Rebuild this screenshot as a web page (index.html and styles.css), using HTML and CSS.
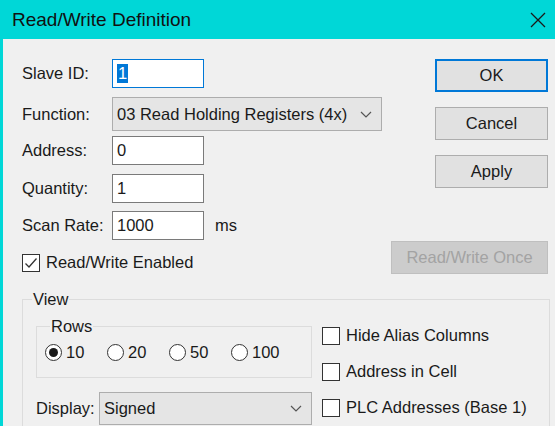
FILE: index.html
```html
<!DOCTYPE html>
<html>
<head>
<meta charset="utf-8">
<link rel="stylesheet" href="styles.css">
</head>
<body>
<div class="window">
  <div class="titlebar">
    <span class="title">Read/Write Definition</span>
    <svg class="close" width="16" height="16" viewBox="0 0 16 16"><path d="M1 1L15 15M15 1L1 15" stroke="#1a1a1a" stroke-width="1.3" fill="none"/></svg>
  </div>
  <div class="client">
    <div class="top">
      <div class="form">
        <div class="row r1">
          <span class="label">Slave ID:</span>
          <div class="input focus"><span class="sel">1</span></div>
        </div>
        <div class="row r2">
          <span class="label">Function:</span>
          <div class="combo wide"><span>03 Read Holding Registers (4x)</span><svg class="chev" width="12" height="7" viewBox="0 0 12 7"><path d="M1 1L6 6L11 1" stroke="#555" stroke-width="1.2" fill="none"/></svg></div>
        </div>
        <div class="row r3">
          <span class="label">Address:</span>
          <div class="input"><span>0</span></div>
        </div>
        <div class="row r4">
          <span class="label">Quantity:</span>
          <div class="input"><span>1</span></div>
        </div>
        <div class="row r5">
          <span class="label">Scan Rate:</span>
          <div class="input"><span>1000</span></div>
          <span class="unit">ms</span>
        </div>
        <div class="check enabled">
          <span class="box"><svg width="16" height="16" viewBox="0 0 16 16"><path d="M2.5 8.5L6 12L13.5 3.5" stroke="#333" stroke-width="1.3" fill="none"/></svg></span>
          <span>Read/Write Enabled</span>
        </div>
      </div>
      <div class="buttons">
        <div class="btn default">OK</div>
        <div class="btn">Cancel</div>
        <div class="btn">Apply</div>
        <div class="btn disabled">Read/Write Once</div>
      </div>
    </div>
    <div class="group view">
      <span class="legend">View</span>
      <div class="view-body">
        <div class="view-left">
          <div class="group rows">
            <span class="legend">Rows</span>
            <div class="radios">
              <div class="radio on"><span class="circle"></span><span>10</span></div>
              <div class="radio"><span class="circle"></span><span>20</span></div>
              <div class="radio"><span class="circle"></span><span>50</span></div>
              <div class="radio"><span class="circle"></span><span>100</span></div>
            </div>
          </div>
          <div class="display">
            <span class="label2">Display:</span>
            <div class="combo disp"><span>Signed</span><svg class="chev" width="12" height="7" viewBox="0 0 12 7"><path d="M1 1L6 6L11 1" stroke="#555" stroke-width="1.2" fill="none"/></svg></div>
          </div>
        </div>
        <div class="view-right">
          <div class="check"><span class="box"></span><span>Hide Alias Columns</span></div>
          <div class="check"><span class="box"></span><span>Address in Cell</span></div>
          <div class="check"><span class="box"></span><span>PLC Addresses (Base 1)</span></div>
        </div>
      </div>
    </div>
  </div>
</div>
</body>
</html>
```

FILE: styles.css
```css
* { box-sizing: border-box; }
html, body { margin: 0; padding: 0; }
body {
  width: 555px;
  height: 426px;
  overflow: hidden;
  font-family: "Liberation Sans", Arial, sans-serif;
  font-size: 16.5px;
  color: #1a1a1a;
  background: #f0f0f0;
}
.window {
  width: 555px;
  height: 426px;
  border-left: 3px solid #00d7d7;
  background: #f0f0f0;
  overflow: hidden;
}
.titlebar {
  height: 39px;
  background: #00d7d7;
  margin-left: -3px;
  display: flex;
  align-items: center;
  justify-content: space-between;
  padding: 0 9px 0 12px;
}
.title {
  font-size: 19px;
  color: #111;
}
.close { display: block; }
.client {
  padding: 20px 0 0 19px;
}
.top {
  display: flex;
  justify-content: space-between;
}
.form {
  display: flex;
  flex-direction: column;
}
.row {
  display: flex;
  align-items: center;
}
.r2 { margin-top: 9px; }
.r3 { margin-top: 5px; }
.r4 { margin-top: 9px; }
.r5 { margin-top: 8px; }
.label { width: 90px; }
.input {
  width: 92px;
  height: 29px;
  background: #fff;
  border: 1px solid #7a7a7a;
  display: flex;
  align-items: center;
  padding-left: 4px;
}
.input.focus { border-color: #0078d7; }
.sel {
  background: #0078d7;
  color: #fff;
  padding: 0 1px;
  line-height: 19px;
}
.unit { margin-left: 11px; }
.combo {
  height: 34px;
  background: #e5e5e5;
  border: 1px solid #adadad;
  display: flex;
  align-items: center;
  justify-content: space-between;
  padding: 0 9px 0 4px;
}
.combo.wide { width: 270px; }
.check {
  display: flex;
  align-items: center;
  gap: 6px;
}
.check .box {
  width: 18px;
  height: 18px;
  background: #fff;
  border: 1px solid #333;
  display: flex;
  align-items: center;
  justify-content: center;
}
.enabled { margin-top: 13px; }
.buttons {
  display: flex;
  flex-direction: column;
  align-items: flex-end;
  width: 160px;
  margin-right: 7px;
}
.btn {
  width: 113px;
  height: 33px;
  background: #e1e1e1;
  border: 1px solid #adadad;
  display: flex;
  align-items: center;
  justify-content: center;
  margin-bottom: 15px;
}
.btn.default { border: 2px solid #0078d7; }
.btn.disabled {
  width: 157px;
  margin-top: 38px;
  background: #cccccc;
  border-color: #bfbfbf;
  color: #a3a3a3;
}
.group {
  position: relative;
  border: 1px solid #dcdcdc;
}
.legend {
  position: absolute;
  top: -10px;
  left: 9px;
  background: #f0f0f0;
  padding: 0 1px;
  line-height: 18px;
}
.view {
  margin-top: 10px;
  width: 528px;
  height: 140px;
}
.view-body {
  display: flex;
  padding: 26px 0 0 13px;
}
.view-left { width: 286px; }
.rows {
  width: 276px;
  height: 52px;
}
.rows .legend { left: 13px; }
.radios {
  display: flex;
  padding: 16px 0 0 8px;
}
.radio {
  display: flex;
  align-items: center;
  gap: 4px;
  width: 62px;
}
.circle {
  width: 17px;
  height: 17px;
  border-radius: 50%;
  border: 1px solid #333;
  background: #fff;
  display: flex;
  align-items: center;
  justify-content: center;
}
.radio.on .circle::after {
  content: "";
  width: 9px;
  height: 9px;
  border-radius: 50%;
  background: #1a1a1a;
}
.display {
  display: flex;
  align-items: center;
  margin-top: 14px;
}
.label2 { width: 63px; }
.combo.disp { width: 213px; height: 33px; }
.view-right {
  display: flex;
  flex-direction: column;
  gap: 17px;
}
```
